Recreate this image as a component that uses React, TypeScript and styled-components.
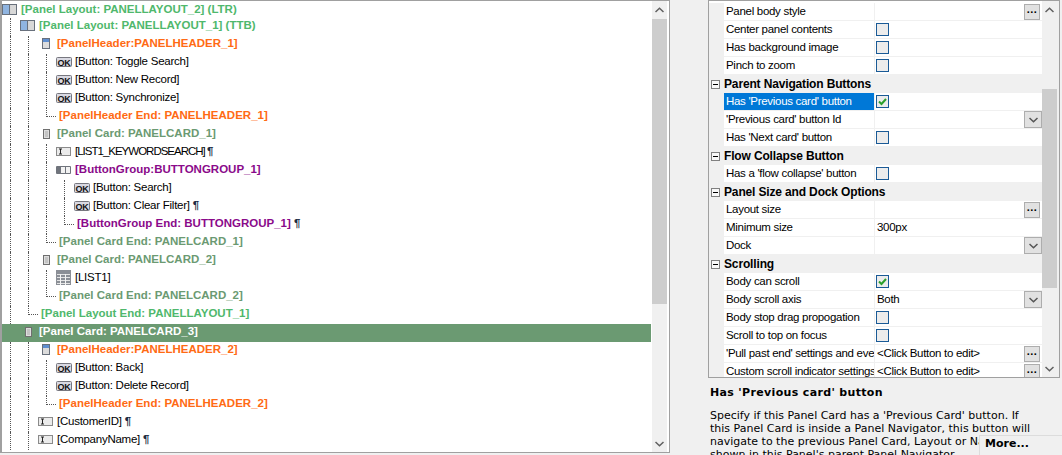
import { FC } from "react";
import styled, { createGlobalStyle } from "styled-components";

type IconName = "layout" | "header" | "card" | "ok" | "input" | "group" | "grid";

interface ITreeRow {
	guides: number;
	icon?: IconName;
	text: string;
	color?: string;
	bold?: boolean;
	pilcrow?: boolean;
	selected?: boolean;
	tight?: boolean;
}

const GREEN = "#4fb86c";
const CARD = "#6b9a72";
const ORANGE = "#ff6a13";
const PURPLE = "#8a0a8a";

const treeRows: ITreeRow[] = [
	{ guides: 0, icon: "layout", text: "[Panel Layout: PANELLAYOUT_2] (LTR)", color: GREEN, bold: true },
	{ guides: 1, icon: "layout", text: "[Panel Layout: PANELLAYOUT_1] (TTB)", color: GREEN, bold: true },
	{ guides: 2, icon: "header", text: "[PanelHeader:PANELHEADER_1]", color: ORANGE, bold: true },
	{ guides: 3, icon: "ok", text: "[Button: Toggle Search]" },
	{ guides: 3, icon: "ok", text: "[Button: New Record]" },
	{ guides: 3, icon: "ok", text: "[Button: Synchronize]" },
	{ guides: 3, text: "[PanelHeader End: PANELHEADER_1]", color: ORANGE, bold: true },
	{ guides: 2, icon: "card", text: "[Panel Card: PANELCARD_1]", color: CARD, bold: true },
	{ guides: 3, icon: "input", text: "[LIST1_KEYWORDSEARCH]", pilcrow: true, tight: true },
	{ guides: 3, icon: "group", text: "[ButtonGroup:BUTTONGROUP_1]", color: PURPLE, bold: true },
	{ guides: 4, icon: "ok", text: "[Button: Search]" },
	{ guides: 4, icon: "ok", text: "[Button: Clear Filter]", pilcrow: true },
	{ guides: 4, text: "[ButtonGroup End: BUTTONGROUP_1]", color: PURPLE, bold: true, pilcrow: true },
	{ guides: 3, text: "[Panel Card End: PANELCARD_1]", color: CARD, bold: true },
	{ guides: 2, icon: "card", text: "[Panel Card: PANELCARD_2]", color: CARD, bold: true },
	{ guides: 3, icon: "grid", text: "[LIST1]" },
	{ guides: 3, text: "[Panel Card End: PANELCARD_2]", color: CARD, bold: true },
	{ guides: 2, text: "[Panel Layout End: PANELLAYOUT_1]", color: GREEN, bold: true },
	{ guides: 1, icon: "card", text: "[Panel Card: PANELCARD_3]", color: "#fff", bold: true, selected: true },
	{ guides: 2, icon: "header", text: "[PanelHeader:PANELHEADER_2]", color: ORANGE, bold: true },
	{ guides: 3, icon: "ok", text: "[Button: Back]" },
	{ guides: 3, icon: "ok", text: "[Button: Delete Record]" },
	{ guides: 3, text: "[PanelHeader End: PANELHEADER_2]", color: ORANGE, bold: true },
	{ guides: 2, icon: "input", text: "[CustomerID]", pilcrow: true },
	{ guides: 2, icon: "input", text: "[CompanyName]", pilcrow: true },
];

type Editor = "more" | "drop" | "check" | "checked";

interface IProp {
	section?: boolean;
	name: string;
	value?: string;
	editor?: Editor;
	selected?: boolean;
}

const propRows: IProp[] = [
	{ name: "Panel body style", editor: "more" },
	{ name: "Center panel contents", editor: "check" },
	{ name: "Has background image", editor: "check" },
	{ name: "Pinch to zoom", editor: "check" },
	{ section: true, name: "Parent Navigation Buttons" },
	{ name: "Has 'Previous card' button", editor: "checked", selected: true },
	{ name: "'Previous card' button Id", editor: "drop" },
	{ name: "Has 'Next card' button", editor: "check" },
	{ section: true, name: "Flow Collapse Button" },
	{ name: "Has a 'flow collapse' button", editor: "check" },
	{ section: true, name: "Panel Size and Dock Options" },
	{ name: "Layout size", editor: "more" },
	{ name: "Minimum size", value: "300px" },
	{ name: "Dock", editor: "drop" },
	{ section: true, name: "Scrolling" },
	{ name: "Body can scroll", editor: "checked" },
	{ name: "Body scroll axis", value: "Both", editor: "drop" },
	{ name: "Body stop drag propogation", editor: "check" },
	{ name: "Scroll to top on focus", editor: "check" },
	{ name: "'Pull past end' settings and events", value: "<Click Button to edit>", editor: "more" },
	{ name: "Custom scroll indicator settings", value: "<Click Button to edit>", editor: "more" },
];

const TreeIcon: FC<{ name: IconName }> = ({ name }) => (
	<IconBox width="16" height="16" viewBox="0 0 16 16">
		{name === "layout" && (
			<>
				<rect x="0.5" y="2.5" width="14" height="10" fill="#d4d4d4" stroke="#68707c" />
				<rect x="1" y="3" width="6" height="9" fill="#8fb4e0" />
				<line x1="7.5" y1="3" x2="7.5" y2="12" stroke="#68707c" />
				<rect x="9" y="3" width="5" height="9" fill="#d8d8d8" />
			</>
		)}
		{name === "header" && (
			<>
				<rect x="4.5" y="2.5" width="7" height="10" fill="#dcdcdc" stroke="#68707c" />
				<rect x="5" y="3" width="6" height="3" fill="#5f8fd0" />
			</>
		)}
		{name === "card" && (
			<>
				<rect x="5.5" y="3.5" width="6" height="9" fill="#dedede" stroke="#6f6f6f" />
				<rect x="7" y="5" width="3" height="6" fill="#c4c4c4" />
			</>
		)}
		{name === "ok" && (
			<>
				<rect x="0.5" y="3.5" width="15" height="9" rx="1" fill="#d9d9e2" stroke="#77777f" />
				<text x="8" y="11.5" textAnchor="middle" fontSize="9" fontWeight="700" fontFamily="'Liberation Sans', sans-serif" fill="#111">
					OK
				</text>
			</>
		)}
		{name === "input" && (
			<>
				<rect x="0.5" y="3.5" width="14" height="8" fill="#ebebeb" stroke="#8a8a8a" />
				<path d="M3 5h3M3 10h3M4.5 5v5" stroke="#222" fill="none" />
			</>
		)}
		{name === "group" && (
			<>
				<rect x="0" y="4" width="15" height="8" rx="1" fill="#70747c" />
				<rect x="5" y="5" width="4" height="6" fill="#f2f2f2" />
				<rect x="10" y="5" width="4" height="6" fill="#f2f2f2" />
			</>
		)}
		{name === "grid" && (
			<>
				<rect x="0" y="0" width="15" height="15" fill="#8b8f96" />
				<path d="M1 4.5h13M1 7.5h13M1 10.5h13M1 13.5h13" stroke="#e4e4e4" />
				<path d="M4.5 4v11M9.5 4v11" stroke="#f4f4f4" />
			</>
		)}
	</IconBox>
);

const Chevron: FC<{ up?: boolean; color?: string }> = ({ up = false, color = "#606060" }) => (
	<svg width="9" height="6" viewBox="0 0 9 6">
		<path d={up ? "M0.5 5L4.5 1.2L8.5 5" : "M0.5 1L4.5 4.8L8.5 1"} stroke={color} strokeWidth="1.5" fill="none" />
	</svg>
);

const Scrollbar: FC<{ $thumbTop: number; $thumbHeight: number }> = ({ $thumbTop, $thumbHeight }) => (
	<ScrollTrack>
		<ScrollEnd>
			<Chevron up />
		</ScrollEnd>
		<ThumbArea>
			<Thumb $top={$thumbTop} $height={$thumbHeight} />
		</ThumbArea>
		<ScrollEnd>
			<Chevron />
		</ScrollEnd>
	</ScrollTrack>
);

const PropEditor: FC<{ row: IProp }> = ({ row }) => {
	const { editor, value } = row;
	return (
		<ValueCell>
			{(editor === "check" || editor === "checked") && (
				<CheckBox>
					{editor === "checked" && (
						<svg width="11" height="11" viewBox="0 0 11 11">
							<path d="M2 5.5L4.5 8L9 3" stroke="#2ca02c" strokeWidth="2" fill="none" />
						</svg>
					)}
				</CheckBox>
			)}
			{value && <ValueText>{value}</ValueText>}
			{editor === "more" && <MoreButton>...</MoreButton>}
			{editor === "drop" && (
				<DropButton>
					<Chevron color="#555" />
				</DropButton>
			)}
		</ValueCell>
	);
};

const App: FC = () => {
	return (
		<>
			<GlobalStyle />
			<Page>
				<TreePanel>
					<TreeBody>
						{treeRows.map((row, index) => (
							<TreeRow key={row.text} $first={index === 0} $selected={!!row.selected}>
								{Array.from({ length: row.guides }).map((_, i) => (
									<Guide key={i} $elbow={!row.icon && i === row.guides - 1} />
								))}
								{row.icon && <TreeIcon name={row.icon} />}
								<RowText $color={row.color} $bold={!!row.bold} $tight={!!row.tight}>
									{row.text}
									{row.pilcrow && <Pilcrow> ¶</Pilcrow>}
								</RowText>
							</TreeRow>
						))}
					</TreeBody>
					<Scrollbar $thumbTop={1} $thumbHeight={285} />
				</TreePanel>

				<SideColumn>
					<PropertyGrid>
						<PropList>
							{propRows.map((row) =>
								row.section ? (
									<SectionRow key={row.name}>
										<Gutter>
											<Collapse />
										</Gutter>
										<SectionName>{row.name}</SectionName>
									</SectionRow>
								) : (
									<PropRow key={row.name}>
										<Gutter />
										<NameCell $selected={!!row.selected}>{row.name}</NameCell>
										<PropEditor row={row} />
									</PropRow>
								),
							)}
						</PropList>
						<Scrollbar $thumbTop={71} $thumbHeight={199} />
					</PropertyGrid>

					<HelpPanel>
						<HelpTitle>Has 'Previous card' button</HelpTitle>
						<HelpText>
							Specify if this Panel Card has a 'Previous Card' button. If
							<br />
							this Panel Card is inside a Panel Navigator, this button will
							<br />
							navigate to the previous Panel Card, Layout or Navigator
							<br />
							shown in this Panel's parent Panel Navigator.
						</HelpText>
						<MoreLink>More...</MoreLink>
					</HelpPanel>
				</SideColumn>
			</Page>
		</>
	);
};

export default App;

const GlobalStyle = createGlobalStyle`
	html, body {
		margin: 0;
		height: 455px;
		overflow: hidden;
		background-color: #f0f0f0;
	}
	* {
		box-sizing: border-box;
	}
`;

const Page = styled.div`
	width: 1062px;
	height: 455px;
	display: flex;
	font-family: "Liberation Sans", Arial, sans-serif;
	font-size: 11.5px;
	letter-spacing: -0.3px;
	color: #000;
	overflow: hidden;
`;

const TreePanel = styled.div`
	width: 670px;
	height: 453px;
	display: flex;
	border: 1px solid #a0a0a0;
	border-left-width: 2px;
	background-color: #fff;
`;

const TreeBody = styled.div`
	width: 650px;
	padding-right: 1px;
	overflow: hidden;
	margin-top: -1px;
`;

const IconBox = styled.svg`
	flex: none;
	display: block;
`;

const Guide = styled.span<{ $elbow: boolean }>`
	flex: none;
	width: 10px;
	margin-left: 8px;
	height: ${({ $elbow }) => ($elbow ? "9px" : "auto")};
	align-self: ${({ $elbow }) => ($elbow ? "flex-start" : "stretch")};
	border-left: 1px dotted #555;
	border-bottom: ${({ $elbow }) => ($elbow ? "1px dotted #555" : "0")};
`;

const TreeRow = styled.div<{ $first: boolean; $selected: boolean }>`
	height: 18px;
	display: flex;
	align-items: flex-start;
	padding-top: ${({ $first }) => ($first ? "2px" : "0")};
	background-color: ${({ $selected }) => ($selected ? "#6b9a72" : "transparent")};

	${Guide} {
		border-color: ${({ $selected }) => ($selected ? "transparent" : "#555")};
	}
`;

const RowText = styled.span<{ $color?: string; $bold: boolean; $tight: boolean }>`
	margin-left: 3px;
	line-height: 14px;
	white-space: nowrap;
	color: ${({ $color }) => $color || "#000"};
	font-weight: ${({ $bold }) => ($bold ? 700 : 400)};
	letter-spacing: ${({ $bold, $tight }) => ($tight ? "-1px" : $bold ? "0" : "-0.25px")};
`;

const Pilcrow = styled.span`
	font-weight: 700;
	color: #1c2c44;
`;

const ScrollTrack = styled.div`
	width: 15px;
	flex: none;
	display: flex;
	flex-direction: column;
	background-color: #f0f0f0;
`;

const ScrollEnd = styled.div`
	height: 17px;
	flex: none;
	display: flex;
	align-items: center;
	justify-content: center;
`;

const ThumbArea = styled.div`
	flex: 1;
`;

const Thumb = styled.div<{ $top: number; $height: number }>`
	margin-top: ${({ $top }) => $top}px;
	height: ${({ $height }) => $height}px;
	background-color: #cdcdcd;
`;

const SideColumn = styled.div`
	width: 354px;
	margin-left: 38px;
	display: flex;
	flex-direction: column;
`;

const PropertyGrid = styled.div`
	width: 352px;
	height: 378px;
	flex: none;
	display: flex;
	border: 1px solid #a0a0a0;
	background-color: #f0f0f0;
	padding-right: 2px;
`;

const PropList = styled.div`
	width: 333px;
	flex: none;
	overflow: hidden;
	padding-top: 2px;
	background-color: #fff;
`;

const Gutter = styled.div`
	width: 15px;
	flex: none;
	align-self: stretch;
	display: flex;
	align-items: center;
	padding-left: 2px;
	background-color: #f0f0f0;
`;

const Collapse = styled.span`
	position: relative;
	width: 9px;
	height: 9px;
	border: 1px solid #808080;
	background-color: #f8f8f8;

	&::after {
		content: "";
		position: absolute;
		left: 1px;
		top: 3px;
		width: 5px;
		height: 1px;
		background-color: #000;
	}
`;

const PropRow = styled.div`
	height: 18px;
	display: flex;
	align-items: stretch;
	border-bottom: 1px solid #f0f0f0;
`;

const SectionRow = styled.div`
	height: 18px;
	display: flex;
	align-items: center;
	background-color: #f0f0f0;
`;

const SectionName = styled.div`
	font-size: 12px;
	font-weight: 700;
	letter-spacing: -0.15px;
	white-space: nowrap;
`;

const NameCell = styled.div<{ $selected: boolean }>`
	width: 150px;
	flex: none;
	padding-left: 2px;
	line-height: 17px;
	white-space: nowrap;
	overflow: hidden;
	color: ${({ $selected }) => ($selected ? "#fff" : "#000")};
	background-color: ${({ $selected }) => ($selected ? "#0078d7" : "transparent")};
`;

const ValueCell = styled.div`
	flex: 1;
	min-width: 0;
	display: flex;
	align-items: center;
	justify-content: space-between;
	padding-left: 2px;
	border-left: 1px solid #f0f0f0;
`;

const ValueText = styled.span`
	white-space: nowrap;
	line-height: 17px;
`;

const CheckBox = styled.span`
	width: 13px;
	height: 13px;
	margin-left: -1px;
	display: flex;
	align-items: center;
	justify-content: center;
	border: 1px solid #1a5a96;
	background-color: #ececec;
`;

const MoreButton = styled.span`
	width: 16px;
	height: 16px;
	margin-left: auto;
	margin-right: 2px;
	display: flex;
	align-items: center;
	justify-content: center;
	padding-bottom: 5px;
	font-weight: 700;
	font-size: 11px;
	letter-spacing: 0.5px;
	border: 1px solid #adadad;
	background-color: #e1e1e1;
`;

const DropButton = styled.span`
	width: 18px;
	height: 17px;
	margin-left: auto;
	display: flex;
	align-items: center;
	justify-content: center;
	border: 1px solid #adadad;
	background-color: #e1e1e1;
`;

const HelpPanel = styled.div`
	position: relative;
	flex: 1;
	min-height: 0;
	padding: 8px 0 0 2px;
	font-family: "DejaVu Sans", Verdana, sans-serif;
	font-size: 11px;
	letter-spacing: 0;
	overflow: hidden;
`;

const HelpTitle = styled.div`
	font-weight: 700;
	letter-spacing: 0.34px;
	line-height: 14px;
	white-space: nowrap;
`;

const HelpText = styled.div`
	margin-top: 9px;
	line-height: 13px;
	white-space: nowrap;
`;

const MoreLink = styled.div`
	position: absolute;
	right: 0;
	bottom: 0;
	width: 83px;
	height: 20px;
	padding: 0 0 0 5px;
	font-weight: 700;
	line-height: 16px;
	border-top: 1px solid #dcdcdc;
	border-left: 1px solid #dcdcdc;
	background-color: #f0f0f0;
`;
